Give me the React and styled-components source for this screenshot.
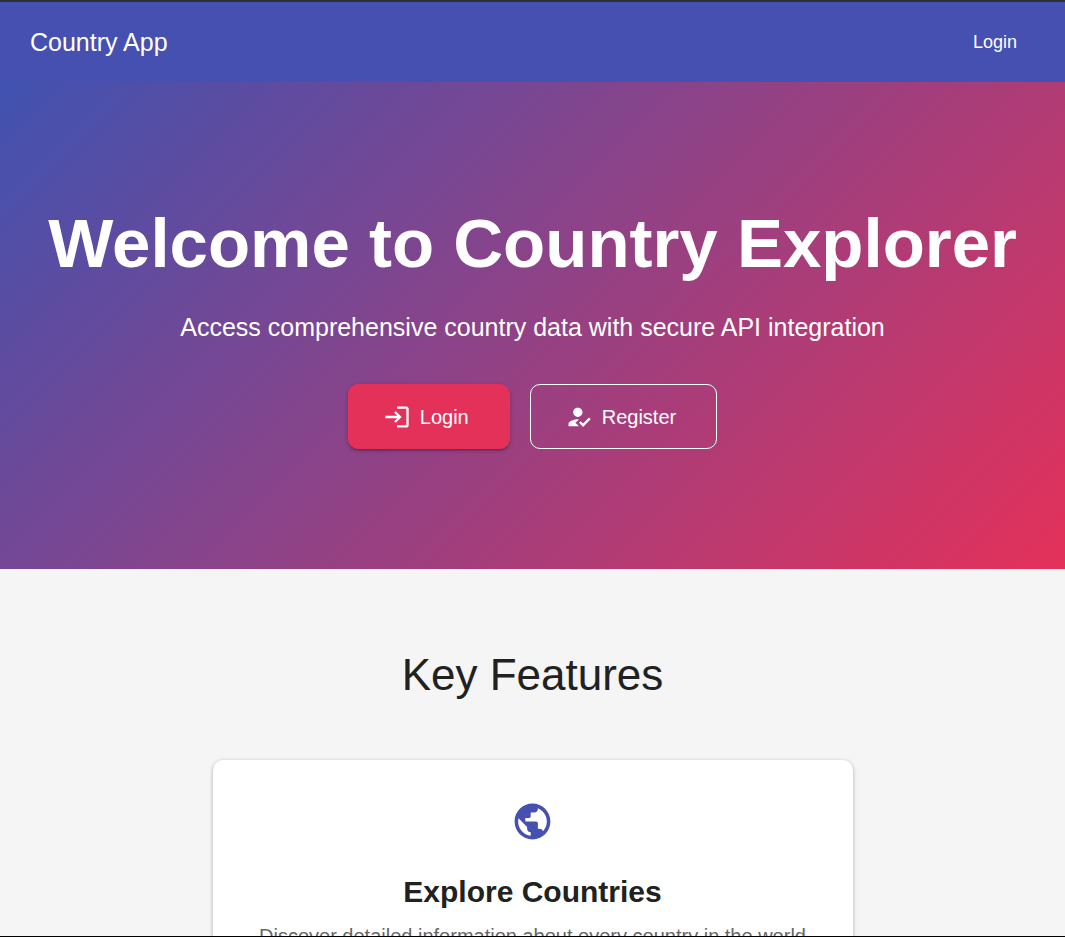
import React from 'react';
import styled, { createGlobalStyle, css } from 'styled-components';
import { MdLogin, MdHowToReg, MdPublic } from 'react-icons/md';

const GlobalStyle = createGlobalStyle`
  *, *::before, *::after { box-sizing: border-box; }
  body {
    margin: 0;
    font-family: 'Liberation Sans', Arial, sans-serif;
    color: #212121;
    background: #f5f5f5;
  }
  h1, h2, h3, p { margin: 0; }
`;

const Frame = styled.div`
  display: flex;
  flex-direction: column;
  height: 100vh;
  overflow: hidden;
  border-top: 2px solid #2d2e36;
  border-bottom: 1px solid #000;
`;

const Header = styled.header`
  display: flex;
  flex-shrink: 0;
  align-items: center;
  justify-content: space-between;
  height: 80px;
  padding: 0 30px;
  color: #fff;
  background: #4550b0;
`;

const Brand = styled.a`
  font-size: 25px;
  line-height: 40px;
  color: inherit;
  text-decoration: none;
`;

const NavButton = styled.button`
  padding: 8px 18px;
  border: 0;
  font-family: inherit;
  font-size: 18px;
  line-height: 32px;
  color: inherit;
  background: transparent;
  cursor: pointer;
`;

const Main = styled.main`
  flex: 1;
  min-height: 0;
  overflow-y: auto;
  scrollbar-width: none;
`;

const Hero = styled.section`
  display: flex;
  flex-direction: column;
  align-items: center;
  padding: 120px 30px;
  text-align: center;
  color: #fff;
  background: linear-gradient(135deg, #4052b0 0%, #e4315a 100%);
`;

const HeroTitle = styled.h1`
  font-size: 69px;
  font-weight: 700;
  line-height: 84px;
`;

const HeroText = styled.p`
  margin-top: 21px;
  font-size: 25px;
  line-height: 40px;
`;

const Actions = styled.div`
  display: flex;
  gap: 20px;
  margin-top: 37px;
`;

const ActionButton = styled.button`
  display: flex;
  align-items: center;
  gap: 9px;
  height: 65px;
  padding: 0 40px 0 34px;
  border: 1px solid #fff;
  border-radius: 10px;
  font-family: inherit;
  font-size: 20px;
  line-height: 32px;
  color: #fff;
  background: transparent;
  cursor: pointer;

  ${({ $filled }) =>
    $filled &&
    css`
      border-color: #e4315a;
      background: #e4315a;
      box-shadow: 0 3px 2px -2px rgba(0, 0, 0, 0.2), 0 2px 3px rgba(0, 0, 0, 0.14),
        0 1px 5px rgba(0, 0, 0, 0.12);
    `}

  svg { font-size: 28px; }
`;

const Features = styled.section`
  display: flex;
  flex-direction: column;
  align-items: center;
  padding: 80px 30px;
`;

const FeaturesTitle = styled.h2`
  font-size: 44px;
  font-weight: 400;
  line-height: 52px;
`;

const FeatureCard = styled.article`
  display: flex;
  flex-direction: column;
  align-items: center;
  width: 100%;
  max-width: 640px;
  margin-top: 59px;
  padding: 40px;
  border-radius: 10px;
  text-align: center;
  background: #fff;
  box-shadow: 0 2px 2px -1px rgba(0, 0, 0, 0.2), 0 1px 3px rgba(0, 0, 0, 0.14),
    0 1px 5px rgba(0, 0, 0, 0.18);

  svg {
    font-size: 43px;
    color: #4550b0;
  }
`;

const CardTitle = styled.h3`
  margin-top: 29px;
  font-size: 30px;
  line-height: 40px;
`;

const CardText = styled.p`
  margin-top: 8px;
  font-size: 20px;
  line-height: 32px;
  color: #666;
`;

export default function App() {
  return (
    <>
      <GlobalStyle />
      <Frame>
        <Header>
          <Brand href="#">Country App</Brand>
          <NavButton type="button">Login</NavButton>
        </Header>
        <Main>
          <Hero>
            <HeroTitle>Welcome to Country Explorer</HeroTitle>
            <HeroText>Access comprehensive country data with secure API integration</HeroText>
            <Actions>
              <ActionButton type="button" $filled>
                <MdLogin aria-hidden="true" />
                Login
              </ActionButton>
              <ActionButton type="button">
                <MdHowToReg aria-hidden="true" />
                Register
              </ActionButton>
            </Actions>
          </Hero>
          <Features>
            <FeaturesTitle>Key Features</FeaturesTitle>
            <FeatureCard>
              <MdPublic aria-hidden="true" />
              <CardTitle>Explore Countries</CardTitle>
              <CardText>Discover detailed information about every country in the world</CardText>
            </FeatureCard>
          </Features>
        </Main>
      </Frame>
    </>
  );
}
